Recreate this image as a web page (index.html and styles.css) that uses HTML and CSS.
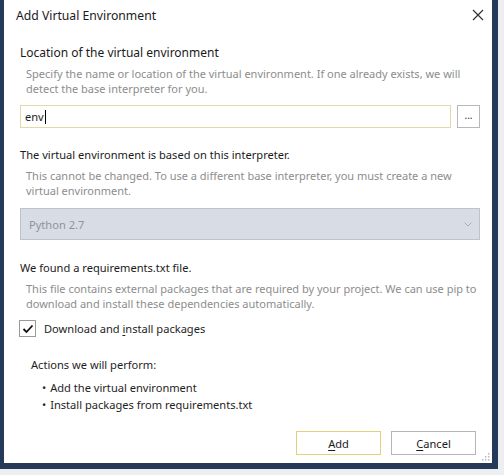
FILE: index.html
```html
<!DOCTYPE html>
<html>
<head>
<meta charset="utf-8">
<link rel="stylesheet" href="styles.css">
</head>
<body>
<div class="shadow">
  <div class="window">
    <div class="titlebar">
      <span class="title">Add Virtual Environment</span>
      <svg class="close" width="12" height="12" viewBox="0 0 12 12"><path d="M1 1L11 11M11 1L1 11" stroke="#333" stroke-width="1.2" fill="none"/></svg>
    </div>
    <div class="content">
      <div class="heading h1">Location of the virtual environment</div>
      <div class="desc">Specify the name or location of the virtual environment. If one already exists, we will detect the base interpreter for you.</div>
      <div class="input-row">
        <div class="input">env<span class="caret"></span></div>
        <div class="browse">...</div>
      </div>

      <div class="heading h2">The virtual environment is based on this interpreter.</div>
      <div class="desc">This cannot be changed. To use a different base interpreter, you must create a new virtual environment.</div>
      <div class="select">
        <span>Python 2.7</span>
        <svg width="8" height="5" viewBox="0 0 8 5"><path d="M0.5 0.5L4 4L7.5 0.5" stroke="#a8b0bd" fill="none"/></svg>
      </div>

      <div class="heading h3">We found a requirements.txt file.</div>
      <div class="desc">This file contains external packages that are required by your project. We can use pip to download and install these dependencies automatically.</div>
      <div class="check-row">
        <span class="checkbox"><svg width="12" height="10" viewBox="0 0 12 10"><path d="M1.5 5L4.5 8L10.5 1.5" stroke="#111" stroke-width="1.8" fill="none"/></svg></span>
        <span class="check-label">Download and <u>i</u>nstall packages</span>
      </div>

      <div class="actions">
        <div class="actions-title">Actions we will perform:</div>
        <ul class="action-list">
          <li>Add the virtual environment</li>
          <li>Install packages from requirements.txt</li>
        </ul>
      </div>

      <div class="buttons">
        <div class="btn btn-default"><u>A</u>dd</div>
        <div class="btn"><u>C</u>ancel</div>
      </div>
    </div>
    <svg class="grip" width="9" height="9" viewBox="0 0 9 9">
      <rect x="7" y="1" width="1.5" height="1.5" fill="#bbb"/>
      <rect x="4" y="4" width="1.5" height="1.5" fill="#bbb"/>
      <rect x="7" y="4" width="1.5" height="1.5" fill="#bbb"/>
      <rect x="1" y="7" width="1.5" height="1.5" fill="#bbb"/>
      <rect x="4" y="7" width="1.5" height="1.5" fill="#bbb"/>
      <rect x="7" y="7" width="1.5" height="1.5" fill="#bbb"/>
    </svg>
  </div>
</div>
</body>
</html>
```

FILE: styles.css
```css
* { box-sizing: border-box; }
html, body {
  margin: 0;
  padding: 0;
  width: 504px;
  height: 475px;
  overflow: hidden;
  background: #eceef0;
}
body {
  font-family: "Noto Sans", "Open Sans", sans-serif;
  font-size: 11.1px;
  color: #1e1e1e;
}
.shadow {
  width: 504px;
  height: 475px;
  padding: 0 6px 6px 0;
}
.window {
  position: relative;
  width: 498px;
  height: 469px;
  background: #fff;
  border-left: 4px solid #253a5b;
  border-right: 6px solid #253a5b;
  border-bottom: 6px solid #253a5b;
  display: flex;
  flex-direction: column;
}
.titlebar {
  height: 31px;
  display: flex;
  align-items: center;
  justify-content: space-between;
  padding: 0 8px 1px 12px;
}
.title {
  font-size: 12.2px;
  color: #1a1a1a;
}
.content {
  padding: 4px 12px 0 16px;
  display: flex;
  flex-direction: column;
}
.heading {
  color: #1a1a1a;
  line-height: 16px;
}
.h1 { margin-top: 10px; font-size: 12px; }
.h2 { margin-top: 19px; }
.h3 { margin-top: 20px; }
.desc {
  color: #8d8d8d;
  font-size: 11px;
  line-height: 15px;
  padding-left: 6px;
  margin-top: 5px;
  margin-right: -6px;
}
.input-row {
  display: flex;
  gap: 6px;
  margin-top: 9px;
}
.input {
  flex: 1;
  height: 23px;
  border: 1px solid #e4d8a6;
  padding: 0 4px;
  line-height: 20px;
  display: flex;
  align-items: center;
}
.caret {
  display: inline-block;
  width: 1px;
  height: 14px;
  background: #000;
  margin-left: 1px;
}
.browse {
  width: 23px;
  height: 23px;
  border: 1px solid #b8b8b8;
  display: flex;
  justify-content: center;
  align-items: center;
  font-size: 10px;
  line-height: 10px;
  padding-bottom: 3px;
  color: #333;
}
.select {
  margin-top: 10px;
  height: 32px;
  background: #d7dce5;
  border: 1px solid #bcc3cf;
  display: flex;
  align-items: center;
  justify-content: space-between;
  padding: 0 7px 0 8px;
  color: #8f949c;
}
.check-row {
  display: flex;
  align-items: center;
  gap: 8px;
  margin-top: 9px;
}
.checkbox {
  width: 17px;
  height: 17px;
  border: 1px solid #9a9a9a;
  display: flex;
  justify-content: center;
  align-items: center;
  margin-left: -1px;
}
.check-label u, .btn u { text-decoration: underline; text-underline-offset: 2px; }
.actions {
  padding-left: 11px;
  margin-top: 20px;
}
.actions-title { line-height: 16px; }
.action-list {
  list-style: none;
  margin: 6px 0 0 0;
  padding: 0 0 0 11px;
}
.action-list li {
  line-height: 17px;
}
.action-list li::before {
  content: "\2022";
  margin-right: 4px;
}
.buttons {
  display: flex;
  justify-content: flex-end;
  gap: 10px;
  margin-top: 18px;
  padding-right: 4px;
}
.btn {
  width: 85px;
  height: 24px;
  border: 1px solid #b5b5b5;
  display: flex;
  justify-content: center;
  align-items: center;
  color: #1a1a1a;
}
.btn-default {
  border: 1px solid #e5cf7c;
}
.grip {
  position: absolute;
  right: 2px;
  bottom: 2px;
}
```
